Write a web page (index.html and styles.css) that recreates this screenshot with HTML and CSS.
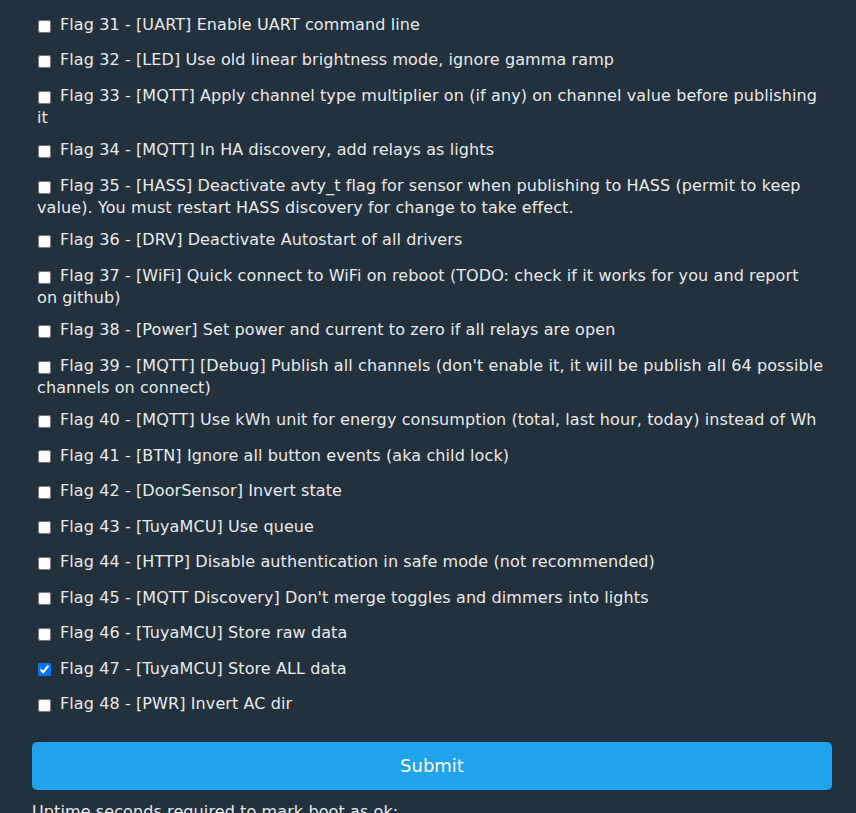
FILE: index.html
```html
<!DOCTYPE html>
<html lang="en">
<head>
    <meta charset="UTF-8">
    <title>Options</title>
    <link rel="stylesheet" href="styles.css">
</head>
<body>
<form class="flags-form">
    <div class="flag"><input type="checkbox" id="flag31"><label for="flag31">Flag 31 - [UART] Enable UART command line</label></div>
    <div class="flag"><input type="checkbox" id="flag32"><label for="flag32">Flag 32 - [LED] Use old linear brightness mode, ignore gamma ramp</label></div>
    <div class="flag"><input type="checkbox" id="flag33"><label for="flag33">Flag 33 - [MQTT] Apply channel type multiplier on (if any) on channel value before publishing it</label></div>
    <div class="flag"><input type="checkbox" id="flag34"><label for="flag34">Flag 34 - [MQTT] In HA discovery, add relays as lights</label></div>
    <div class="flag"><input type="checkbox" id="flag35"><label for="flag35">Flag 35 - [HASS] Deactivate avty_t flag for sensor when publishing to HASS (permit to keep value). You must restart HASS discovery for change to take effect.</label></div>
    <div class="flag"><input type="checkbox" id="flag36"><label for="flag36">Flag 36 - [DRV] Deactivate Autostart of all drivers</label></div>
    <div class="flag"><input type="checkbox" id="flag37"><label for="flag37">Flag 37 - [WiFi] Quick connect to WiFi on reboot (TODO: check if it works for you and report<br>on github)</label></div>
    <div class="flag"><input type="checkbox" id="flag38"><label for="flag38">Flag 38 - [Power] Set power and current to zero if all relays are open</label></div>
    <div class="flag"><input type="checkbox" id="flag39"><label for="flag39">Flag 39 - [MQTT] [Debug] Publish all channels (don't enable it, it will be publish all 64 possible channels on connect)</label></div>
    <div class="flag"><input type="checkbox" id="flag40"><label for="flag40">Flag 40 - [MQTT] Use kWh unit for energy consumption (total, last hour, today) instead of Wh</label></div>
    <div class="flag"><input type="checkbox" id="flag41"><label for="flag41">Flag 41 - [BTN] Ignore all button events (aka child lock)</label></div>
    <div class="flag"><input type="checkbox" id="flag42"><label for="flag42">Flag 42 - [DoorSensor] Invert state</label></div>
    <div class="flag"><input type="checkbox" id="flag43"><label for="flag43">Flag 43 - [TuyaMCU] Use queue</label></div>
    <div class="flag"><input type="checkbox" id="flag44"><label for="flag44">Flag 44 - [HTTP] Disable authentication in safe mode (not recommended)</label></div>
    <div class="flag"><input type="checkbox" id="flag45"><label for="flag45">Flag 45 - [MQTT Discovery] Don't merge toggles and dimmers into lights</label></div>
    <div class="flag"><input type="checkbox" id="flag46"><label for="flag46">Flag 46 - [TuyaMCU] Store raw data</label></div>
    <div class="flag"><input type="checkbox" id="flag47" checked><label for="flag47">Flag 47 - [TuyaMCU] Store ALL data</label></div>
    <div class="flag"><input type="checkbox" id="flag48"><label for="flag48">Flag 48 - [PWR] Invert AC dir</label></div>

    <button type="submit" class="submit-btn">Submit</button>

    <p class="boot-ok">Uptime seconds required to mark boot as ok:</p>
</form>
</body>
</html>
```

FILE: styles.css
```css
body {
    font-family: "DejaVu Sans", Verdana, sans-serif;
    font-size: 16px;
    letter-spacing: 0.1px;
    color: #eaeaea;
    background-color: #22313e;
    margin: 0;
    padding: 0 24px 0 32px;
}

.flags-form {
    padding-top: 10px;
}

.flag {
    padding: 5px 5px 8.5px 5px;
    line-height: 19px;
}

.flag input {
    margin: 4.65px 9px 4.35px 1px;
    vertical-align: top;
}

.submit-btn {
    display: block;
    width: 100%;
    height: 48px;
    margin-top: 17px;
    border: 0;
    border-radius: 5px;
    background-color: #1fa3ec;
    color: #fff;
    font-family: "DejaVu Sans", Verdana, sans-serif;
    font-size: 18px;
    cursor: pointer;
}

.boot-ok {
    margin: 12px 0 0;
}
```
